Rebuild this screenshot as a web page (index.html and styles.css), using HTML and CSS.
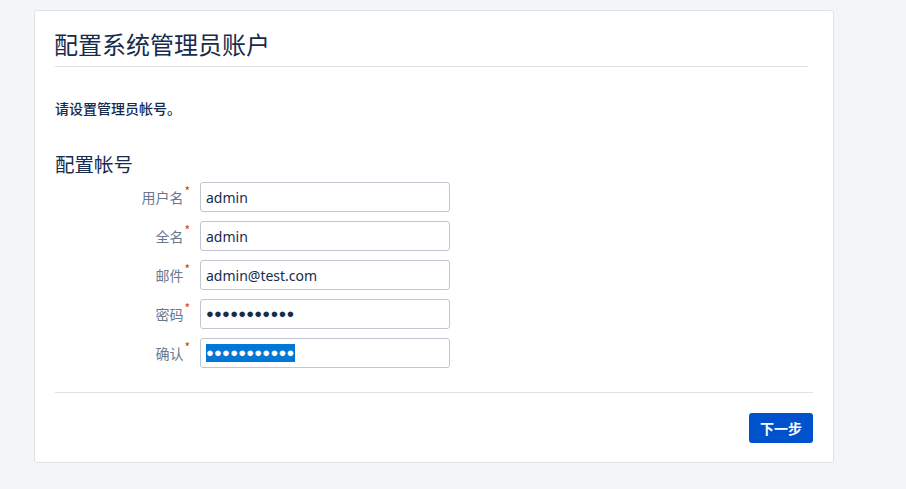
FILE: index.html
```html
<!DOCTYPE html>
<html lang="zh">
<head>
<meta charset="utf-8">
<title>配置系统管理员账户</title>
<link rel="stylesheet" href="styles.css">
</head>
<body>
<div class="card">
  <div class="card-header">
    <h1 class="title">配置系统管理员账户</h1>
  </div>
  <p class="desc">请设置管理员帐号。</p>
  <h2 class="section">配置帐号</h2>
  <form class="form">
    <div class="row">
      <label class="label">用户名<span class="req">*</span></label>
      <input class="field" type="text" value="admin">
    </div>
    <div class="row">
      <label class="label">全名<span class="req">*</span></label>
      <input class="field" type="text" value="admin">
    </div>
    <div class="row">
      <label class="label">邮件<span class="req">*</span></label>
      <input class="field" type="text" value="admin@test.com">
    </div>
    <div class="row">
      <label class="label">密码<span class="req">*</span></label>
      <div class="field pw"><span class="dots">●●●●●●●●●●●</span></div>
    </div>
    <div class="row">
      <label class="label">确认<span class="req">*</span></label>
      <div class="field pw"><span class="dots selected">●●●●●●●●●●●</span></div>
    </div>
  </form>
  <div class="footer">
    <button class="btn" type="button">下一步</button>
  </div>
</div>
</body>
</html>
```
FILE: styles.css
```css
html, body {
  margin: 0;
  padding: 0;
}
body {
  background: #f4f5f7;
  font-family: "Noto Sans", "Noto Sans CJK SC", sans-serif;
  color: #172b4d;
  padding: 10px 0 0 34px;
}
.card {
  box-sizing: border-box;
  width: 800px;
  background: #fff;
  border: 1px solid #dfe1e6;
  border-radius: 3px;
  padding: 18px 20px 19px 20px;
}
.card-header {
  margin-right: 5px;
  border-bottom: 1px solid #dfe1e6;
  padding-bottom: 7px;
}
.title {
  margin: 0 0 0 -1px;
  font-family: "Noto Sans CJK SC", sans-serif;
  font-size: 24px;
  line-height: 30px;
  font-weight: 400;
  color: #172b4d;
}
.desc {
  margin: 31px 0 0 0;
  font-family: "Noto Sans CJK SC", sans-serif;
  font-size: 14px;
  line-height: 20px;
  font-weight: 500;
  color: #172b4d;
}
.section {
  margin: 33px 0 5px 0;
  font-family: "Noto Sans CJK SC", sans-serif;
  font-size: 19.5px;
  line-height: 26px;
  font-weight: 400;
  color: #172b4d;
}
.form {
  display: flex;
  flex-direction: column;
  gap: 9px;
  margin: 0;
}
.row {
  display: flex;
  align-items: center;
  gap: 10px;
}
.label {
  width: 135px;
  text-align: right;
  font-family: "Noto Sans CJK SC", sans-serif;
  font-size: 14px;
  line-height: 20px;
  color: #6b778c;
}
.req {
  color: #de350b;
  font-size: 12px;
  position: relative;
  top: -7px;
  margin-left: 1px;
}
.field {
  box-sizing: border-box;
  width: 250px;
  height: 30px;
  border: 1px solid #c1c7d0;
  border-radius: 3px;
  padding: 0 5px;
  margin: 0;
  font-family: "Noto Sans", "Noto Sans CJK SC", sans-serif;
  font-size: 14px;
  color: #172b4d;
  background: #fff;
  outline: none;
}
.pw {
  display: flex;
  align-items: center;
}
.dots {
  font-family: "Liberation Sans", sans-serif;
  font-size: 13px;
  line-height: 18px;
  color: #172b4d;
  letter-spacing: 0.2px;
}
.dots.selected {
  background: #0078d7;
  color: #fff;
}
.footer {
  margin-top: 24px;
  border-top: 1px solid #dfe1e6;
  padding-top: 20px;
  display: flex;
  justify-content: flex-end;
}
.btn {
  width: 64px;
  height: 30px;
  border: none;
  border-radius: 3px;
  background: #0052cc;
  color: #fff;
  font-family: "Noto Sans CJK SC", sans-serif;
  font-size: 14px;
  font-weight: 700;
  padding: 0;
  cursor: pointer;
}
```
